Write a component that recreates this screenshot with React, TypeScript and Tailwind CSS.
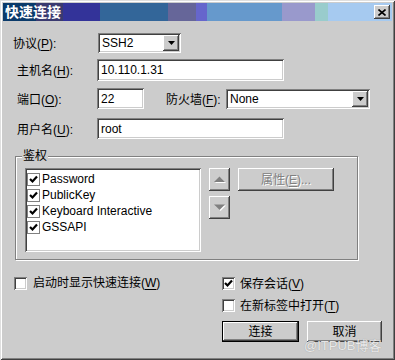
import React from 'react'

// Classic Windows 3D edges
const RAISED =
  'bg-[#cccccc] shadow-[inset_-1px_-1px_0_#404040,inset_1px_1px_0_#ffffff,inset_-2px_-2px_0_#808080]'
const SUNKEN =
  'bg-white shadow-[inset_1px_1px_0_#808080,inset_-1px_-1px_0_#ffffff,inset_2px_2px_0_#404040,inset_-2px_-2px_0_#cccccc]'

const FONT = "font-['Liberation_Sans','Noto_Sans_CJK_SC',sans-serif]"

function Mn({ children }: { children: React.ReactNode }) {
  return <span className="underline underline-offset-2">{children}</span>
}

function Label({ text, k }: { text: string; k: string }) {
  return (
    <span className="text-[12px] text-black whitespace-nowrap">
      {text}(<Mn>{k}</Mn>):
    </span>
  )
}

function DropArrow() {
  return (
    <div className={`w-[16px] h-[16px] flex items-center justify-center ${RAISED}`}>
      <svg width="7" height="4" viewBox="0 0 7 4">
        <path d="M0 0h7L3.5 4z" fill="#000" />
      </svg>
    </div>
  )
}

function Combo({ value, width }: { value: string; width: string }) {
  return (
    <div className={`${width} h-[20px] flex items-center justify-between pl-[4px] pr-[2px] ${SUNKEN}`}>
      <span className="text-[12px] leading-none">{value}</span>
      <DropArrow />
    </div>
  )
}

function TextBox({ value, width, height }: { value: string; width: string; height: string }) {
  return (
    <div className={`${width} ${height} flex items-center pl-[4px] ${SUNKEN}`}>
      <span className="text-[12px] leading-none">{value}</span>
    </div>
  )
}

function Check({ checked, flat }: { checked: boolean; flat?: boolean }) {
  return (
    <div
      className={`w-[13px] h-[13px] shrink-0 flex items-center justify-center ${
        flat ? 'bg-white border border-[#808080]' : SUNKEN
      }`}
    >
      {checked && (
        <svg width="9" height="9" viewBox="0 0 9 9">
          <path d="M1 4l2.5 2.5L8 1.5" stroke="#000" strokeWidth="2.2" fill="none" />
        </svg>
      )}
    </div>
  )
}

function ListItem({ label }: { label: string }) {
  return (
    <div className="h-[16px] flex items-center gap-[2px] pl-[2px]">
      <Check checked flat />
      <span className="text-[12px] leading-none">{label}</span>
    </div>
  )
}

function Arrow({ up }: { up?: boolean }) {
  return (
    <div className={`w-[21px] h-[23px] flex items-center justify-center ${RAISED}`}>
      <svg width="12" height="8" viewBox="0 0 12 8">
        {up ? (
          <>
            <path d="M1 7h11L6.5 1.5z" fill="#fff" />
            <path d="M0 6h11L5.5 0.5z" fill="#808080" />
          </>
        ) : (
          <>
            <path d="M1 1.5h11L6.5 7z" fill="#fff" />
            <path d="M0 0.5h11L5.5 6z" fill="#808080" />
          </>
        )}
      </svg>
    </div>
  )
}

const STRIPES = [
  ['w-[33px]', 'bg-[#0a3a6a]'],
  ['w-[27px]', 'bg-[#3a3a70]'],
  ['w-[37px]', 'bg-[#333399]'],
  ['w-[68px]', 'bg-[#336699]'],
  ['w-[28px]', 'bg-[#666699]'],
  ['w-[11px]', 'bg-[#6666cc]'],
  ['w-[75px]', 'bg-[#6699cc]'],
  ['w-[33px]', 'bg-[#9999cc]'],
  ['w-[13px]', 'bg-[#99cccc]'],
]

export default function App() {
  return (
    <div
      className={`w-[395px] h-[360px] p-[3px] flex flex-col ${FONT} shadow-[inset_1px_1px_0_#dfdfdf,inset_-1px_-1px_0_#404040,inset_2px_2px_0_#ffffff,inset_-2px_-2px_0_#808080] bg-[#cccccc]`}
    >
      {/* Title bar */}
      <div className="relative h-[18px] flex shrink-0">
        {STRIPES.map(([w, c], i) => (
          <div key={i} className={`${w} ${c} h-full`} />
        ))}
        <div className="flex-1 bg-[#a6caf0] flex items-center justify-end pr-[2px]">
          <div className={`w-[16px] h-[14px] flex items-center justify-center ${RAISED}`}>
            <svg width="8" height="7" viewBox="0 0 8 7">
              <path d="M0.5 0.5l7 6M7.5 0.5l-7 6" stroke="#000" strokeWidth="1.6" />
            </svg>
          </div>
        </div>
        <span className="absolute left-[2px] top-0 h-full flex items-center text-[14px] font-bold text-white leading-none">
          快速连接
        </span>
      </div>

      {/* Protocol */}
      <div className="mt-[12px] h-[20px] flex items-center">
        <div className="w-[95px] pl-[10px]">
          <Label text="协议" k="P" />
        </div>
        <Combo value="SSH2" width="w-[83px]" />
      </div>

      {/* Host */}
      <div className="mt-[6px] h-[22px] flex items-center">
        <div className="w-[94px] pl-[14px]">
          <Label text="主机名" k="H" />
        </div>
        <TextBox value="10.110.1.31" width="w-[187px]" height="h-[22px]" />
      </div>

      {/* Port + firewall */}
      <div className="mt-[7px] h-[21px] flex items-center">
        <div className="w-[94px] pl-[14px]">
          <Label text="端口" k="O" />
        </div>
        <TextBox value="22" width="w-[47px]" height="h-[21px]" />
        <div className="ml-[22px] w-[60px]">
          <Label text="防火墙" k="F" />
        </div>
        <Combo value="None" width="w-[144px]" />
      </div>

      {/* Username */}
      <div className="mt-[9px] h-[21px] flex items-center">
        <div className="w-[94px] pl-[14px]">
          <Label text="用户名" k="U" />
        </div>
        <TextBox value="root" width="w-[187px]" height="h-[21px]" />
      </div>

      {/* Auth group */}
      <div className="relative mt-[17px] ml-[12px] w-[343px] h-[104px] border border-[#808080] shadow-[1px_1px_0_#ffffff,inset_1px_1px_0_#ffffff] flex pt-[11px] pl-[9px]">
        <span className="absolute left-[6px] -top-[9px] px-[1px] bg-[#cccccc] text-[12px] leading-[16px]">
          鉴权
        </span>
        <div className={`w-[176px] h-[84px] flex flex-col pt-[3px] ${SUNKEN}`}>
          <ListItem label="Password" />
          <ListItem label="PublicKey" />
          <ListItem label="Keyboard Interactive" />
          <ListItem label="GSSAPI" />
        </div>
        <div className="ml-[8px] flex flex-col gap-[5px]">
          <Arrow up />
          <Arrow />
        </div>
        <div
          className={`ml-[8px] w-[96px] h-[23px] flex items-center justify-center text-[12px] text-[#808080] [text-shadow:1px_1px_0_#ffffff] ${RAISED}`}
        >
          属性(<Mn>E</Mn>)...
        </div>
      </div>

      {/* Bottom options */}
      <div className="mt-[17px] flex">
        <div className="w-[219px] pl-[11px] flex items-start gap-[6px]">
          <Check checked={false} />
          <span className="text-[12px] leading-[13px]">
            启动时显示快速连接(<Mn>W</Mn>)
          </span>
        </div>
        <div className="flex flex-col">
          <div className="flex items-center gap-[5px] h-[13px]">
            <Check checked />
            <span className="text-[12px] leading-none">
              保存会话(<Mn>V</Mn>)
            </span>
          </div>
          <div className="mt-[9px] flex items-center gap-[5px] h-[13px]">
            <Check checked={false} />
            <span className="text-[12px] leading-none">
              在新标签中打开(<Mn>T</Mn>)
            </span>
          </div>
          <div className="mt-[9px] flex gap-[8px]">
            <div className="w-[77px] h-[21px] border border-black">
              <div className={`w-full h-full flex items-center justify-center text-[12px] ${RAISED}`}>
                连接
              </div>
            </div>
            <div className="relative">
              <div className={`w-[75px] h-[21px] flex items-center justify-center text-[12px] ${RAISED}`}>
                取消
              </div>
              <span className="absolute left-[-3px] top-[18px] text-[13px] leading-none text-white/80 [text-shadow:0_0_1px_#888] whitespace-nowrap">
                @ITPUB博客
              </span>
            </div>
          </div>
        </div>
      </div>
    </div>
  )
}
